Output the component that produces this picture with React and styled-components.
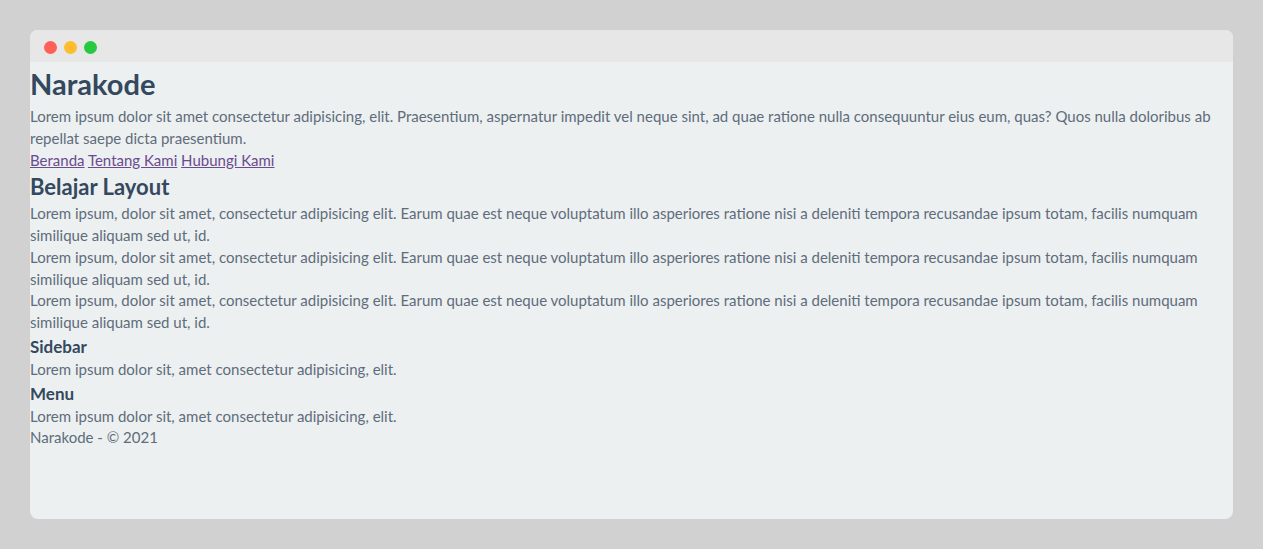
import React from 'react'
import styled, { createGlobalStyle } from 'styled-components'

const GlobalStyle = createGlobalStyle`
  html, body {
    margin: 0;
    padding: 0;
    background: #d1d1d1;
  }
  * {
    box-sizing: border-box;
  }
`

const lorem =
  'Lorem ipsum, dolor sit amet, consectetur adipisicing elit. Earum quae est neque voluptatum illo asperiores ratione nisi a deleniti tempora recusandae ipsum totam, facilis numquam similique aliquam sed ut, id.'

function App() {
  return (
    <>
      <GlobalStyle />
      <Stage>
        <Window>
          <TitleBar>
            <Dot color="#ff5f57" />
            <Dot color="#febc2e" />
            <Dot color="#28c840" />
          </TitleBar>
          <Page>
            <header>
              <H1>Narakode</H1>
              <Text>
                Lorem ipsum dolor sit amet consectetur adipisicing, elit. Praesentium, aspernatur impedit vel neque sint, ad quae ratione nulla consequuntur eius eum, quas? Quos nulla doloribus ab repellat saepe dicta praesentium.
              </Text>
            </header>
            <nav>
              <Link href="#">Beranda</Link> <Link href="#">Tentang Kami</Link> <Link href="#">Hubungi Kami</Link>
            </nav>
            <main>
              <H2>Belajar Layout</H2>
              <Text>{lorem}</Text>
              <Text>{lorem}</Text>
              <Text>{lorem}</Text>
            </main>
            <aside>
              <H3>Sidebar</H3>
              <Text>Lorem ipsum dolor sit, amet consectetur adipisicing, elit.</Text>
            </aside>
            <aside>
              <H3>Menu</H3>
              <Text>Lorem ipsum dolor sit, amet consectetur adipisicing, elit.</Text>
            </aside>
            <footer>
              <Text>Narakode - © 2021</Text>
            </footer>
          </Page>
        </Window>
      </Stage>
    </>
  )
}

export default App

const Stage = styled.div`
  height: 549px;
  padding: 30px;
`

const Window = styled.div`
  height: 489px;
  border-radius: 8px;
  overflow: hidden;
  background: #ecf0f1;
  display: flex;
  flex-direction: column;
`

const TitleBar = styled.div`
  height: 32px;
  flex-shrink: 0;
  background: #e7e7e7;
  display: flex;
  align-items: center;
  gap: 7px;
  padding: 2px 0 0 14px;
`

const Dot = styled.span`
  width: 13px;
  height: 13px;
  border-radius: 50%;
  background: ${p => p.color};
`

const Page = styled.div`
  font-family: Lato, "Open Sans", sans-serif;
  font-size: 15px;
  line-height: 21.75px;
  color: #5f6c7b;
`

const H1 = styled.h1`
  margin: 0;
  font-size: 29px;
  line-height: 44px;
  font-weight: 700;
  color: #34495e;
`

const H2 = styled.h2`
  margin: 0;
  font-size: 22px;
  line-height: 32px;
  font-weight: 700;
  color: #34495e;
`

const H3 = styled.h3`
  margin: 0;
  font-size: 17px;
  line-height: 25px;
  font-weight: 700;
  color: #34495e;
`

const Text = styled.p`
  margin: 0;
`

const Link = styled.a`
  color: #6b4a8f;
  text-decoration: underline;
`
